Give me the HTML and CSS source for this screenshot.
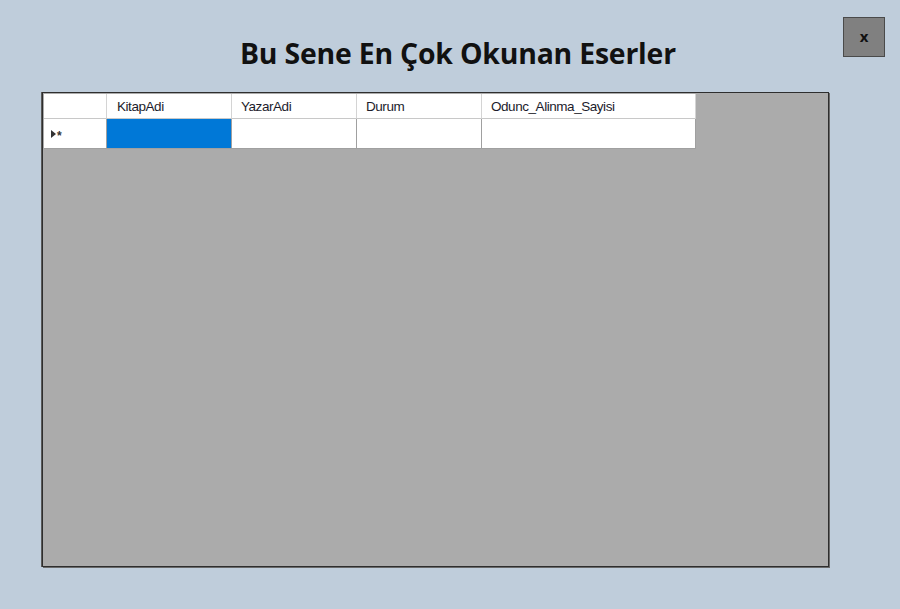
FILE: index.html
```html
<!DOCTYPE html>
<html>
<head>
<meta charset="utf-8">
<link rel="stylesheet" href="styles.css">
</head>
<body>
<div class="form">
  <div class="header">
    <h1 class="title">Bu Sene En Çok Okunan Eserler</h1>
    <button class="close">x</button>
  </div>
  <div class="grid">
    <div class="table">
      <div class="row head">
        <div class="cell rh"></div>
        <div class="cell c1">KitapAdi</div>
        <div class="cell c2">YazarAdi</div>
        <div class="cell c3">Durum</div>
        <div class="cell c4">Odunc_Alinma_Sayisi</div>
      </div>
      <div class="row data">
        <div class="cell rh"><svg class="arrow" width="5" height="8" viewBox="0 0 5 8"><path d="M0 0 L5 4 L0 8 Z" fill="#333"/></svg><span class="star">*</span></div>
        <div class="cell c1 sel"></div>
        <div class="cell c2"></div>
        <div class="cell c3"></div>
        <div class="cell c4"></div>
      </div>
    </div>
  </div>
</div>
</body>
</html>
```
FILE: styles.css
```css
html, body {
  margin: 0;
  padding: 0;
}
body {
  background: #bfcddb;
  width: 900px;
  height: 609px;
  overflow: hidden;
  font-family: "Liberation Sans", Arial, sans-serif;
}
.form {
  display: flex;
  flex-direction: column;
}
.header {
  display: flex;
  align-items: flex-start;
  height: 92px;
  padding-left: 240px;
  padding-right: 15px;
  box-sizing: border-box;
}
.title {
  margin: 31px 0 0 0;
  font-family: "Open Sans", sans-serif;
  font-weight: 700;
  font-size: 28.4px;
  line-height: 44px;
  color: #111;
  letter-spacing: -0.2px;
}
.close {
  margin-left: auto;
  margin-top: 17px;
  width: 42px;
  height: 40px;
  background: #808080;
  border: 1px solid #4a4a4a;
  font-family: "Open Sans", sans-serif;
  font-weight: 700;
  font-size: 15px;
  color: #111;
  padding: 0 0 2px 0;
}
.grid {
  margin-left: 42px;
  width: 787px;
  height: 475px;
  box-sizing: border-box;
  background: #ababab;
  border: 1px solid #2e2e2e;
  box-shadow: 1px 1px 0 #6a6a6a, -1px 0 0 #5a5a5a;
  padding: 1px 0 0 1px;
}
.table {
  display: flex;
  flex-direction: column;
  width: 652px;
}
.row {
  display: grid;
  grid-template-columns: 63px 125px 125px 125px 214px;
}
.head {
  height: 25px;
}
.data {
  height: 30px;
}
.cell {
  background: #fff;
  box-sizing: border-box;
  font-size: 13.5px;
  color: #1c1c2c;
  display: flex;
  align-items: center;
  padding-left: 9px;
  letter-spacing: -0.45px;
}
.head .cell {
  border-right: 1px solid #d4d4d4;
  border-bottom: 1px solid #c8c8c8;
  padding-top: 1px;
}
.data .cell {
  border-right: 1px solid #a0a0a0;
  border-bottom: 1px solid #a0a0a0;
}
.data .sel {
  background: #0078d7;
}
.head .c1 { padding-left: 10px; }
.rh .arrow {
  margin-left: -2px;
  margin-top: 1px;
}
.star {
  font-size: 12px;
  font-weight: 700;
  color: #333;
  margin-left: 1px;
  margin-top: 4px;
}
```
